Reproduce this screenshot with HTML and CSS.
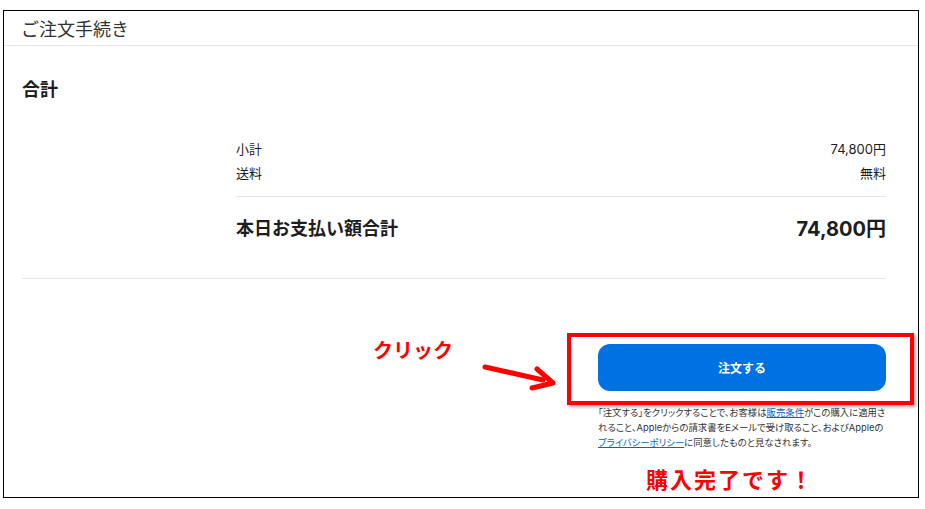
FILE: index.html
```html
<!DOCTYPE html>
<html lang="ja">

<head>
    <meta charset="utf-8">
    <meta name="viewport" content="width=device-width, initial-scale=1">
    <title>ご注文手続き</title>

    <link rel="stylesheet" href="styles.css">

</head>

<body>
    <div class="frame">
        <div class="header">ご注文手続き</div>

        <div class="total">
            <h2>合計</h2>

            <div class="summary">
                <div class="row">
                    <span>小計</span>
                    <span>74,800円</span>
                </div>
                <div class="row">
                    <span>送料</span>
                    <span>無料</span>
                </div>
                <div class="row grand">
                    <span>本日お支払い額合計</span>
                    <span class="amount">74,800円</span>
                </div>
            </div>

            <div class="action">
                <div class="click-label">クリック</div>
                <svg class="arrow" width="80" height="32" viewBox="0 0 80 32">
                    <path d="M4 8 L62 21" stroke="#ff0000" stroke-width="5" stroke-linecap="round" fill="none" />
                    <path d="M56 10 L72 24 L51 29" stroke="#ff0000" stroke-width="5" stroke-linecap="round" stroke-linejoin="round" fill="none" />
                </svg>

                <div class="order">
                    <div class="highlight"></div>
                    <button class="order-btn">注文する</button>
                    <p class="note">「注文する」をクリックすることで、お客様は<a href="#">販売条件</a>がこの購入に適用さ<br>れること、Appleからの請求書をEメールで受け取ること、およびAppleの<br><a href="#">プライバシーポリシー</a>に同意したものと見なされます。</p>
                    <div class="done">購入完了です！</div>
                </div>
            </div>
        </div>
    </div>
</body>

</html>
```

FILE: styles.css
```css
body {
    margin: 0;
    background: #fff;
    font-family: "Inter", "Noto Sans CJK JP", sans-serif;
    color: #1d1d1f;
}

.frame {
    margin: 10px 0 0 3px;
    width: 914px;
    height: 486px;
    border: 1px solid #000;
    overflow: hidden;
}

.header {
    height: 34px;
    padding-left: 17px;
    display: flex;
    align-items: center;
    border-bottom: 1px solid #e6e6e6;
    font-size: 18px;
    color: #333;
}

.total {
    padding: 0 32px 0 18px;
}

.total h2 {
    margin: 31px 0 0;
    font-size: 18px;
    line-height: 26px;
    font-weight: 700;
}

.summary {
    margin: 34px 0 0 214px;
    padding-bottom: 36px;
    position: relative;
}

.row {
    display: flex;
    justify-content: space-between;
    font-size: 13px;
    line-height: 24px;
}

.row.grand {
    margin-top: 11px;
    padding-top: 18px;
    border-top: 1px solid #e6e6e6;
    font-size: 18px;
    line-height: 28px;
    font-weight: 700;
}

.row.grand .amount {
    font-size: 20px;
}

/* bottom divider runs across the whole section */
.summary:after {
    content: "";
    position: absolute;
    left: -214px;
    right: 0;
    bottom: 0;
    border-bottom: 1px solid #e6e6e6;
}

.action {
    position: relative;
    margin-top: 65px;
    display: flex;
    justify-content: flex-end;
}

.click-label {
    position: absolute;
    left: 351px;
    top: -7px;
    font-size: 20px;
    line-height: 28px;
    font-weight: 700;
    color: #ff0000;
}

.arrow {
    position: absolute;
    left: 459px;
    top: 15px;
}

.order {
    position: relative;
    width: 288px;
}

.highlight {
    position: absolute;
    left: -31px;
    top: -11px;
    width: 347px;
    height: 72px;
    box-sizing: border-box;
    border: 4px solid #ff0000;
    box-shadow: 2px 2px 3px rgba(0, 0, 0, 0.35);
}

.order-btn {
    display: block;
    width: 288px;
    height: 47px;
    border: none;
    border-radius: 12px;
    background-color: #0071e3;
    color: #fff;
    font-family: inherit;
    font-size: 12px;
    font-weight: 700;
    cursor: pointer;
}

.note {
    margin: 14px 0 0;
    font-size: 9.4px;
    line-height: 15px;
    color: #333;
    font-feature-settings: "palt";
    white-space: nowrap;
}

.note a {
    color: #0066cc;
}

.done {
    margin-top: 15px;
    padding-right: 24px;
    text-align: center;
    font-size: 22px;
    line-height: 30px;
    font-weight: 700;
    letter-spacing: 2px;
    color: #ff0000;
}
```
